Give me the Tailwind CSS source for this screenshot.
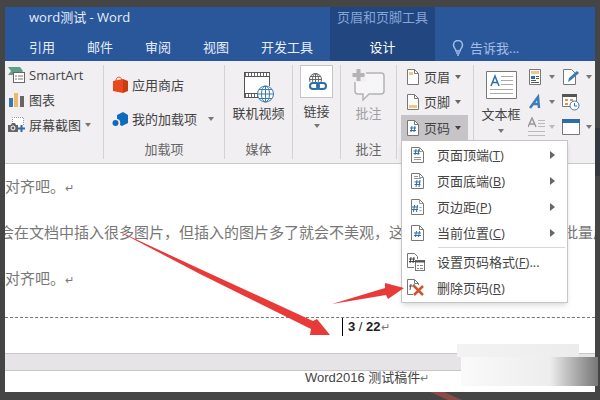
<!DOCTYPE html>
<html lang="zh-CN">
<head>
  <meta charset="UTF-8" />
  <meta name="viewport" content="width=device-width, initial-scale=1.0"/>
  <title>word测试 - Word</title>
  <script src="https://cdn.jsdelivr.net/npm/@tailwindcss/browser@4"></script>
</head>
<body class="relative min-h-screen bg-[#454545] px-[5px] pt-[7px] pb-2 overflow-hidden font-['Open_Sans','Noto_Sans_CJK_SC',sans-serif] text-[13px] leading-5 text-[#444]">

  <!-- window behind the dark backdrop, right edge -->
  <div class="absolute right-0 top-32 h-12 w-[5px] bg-[#34383f]"></div>

  <div class="relative flex flex-col min-h-[385px] bg-white overflow-hidden whitespace-nowrap">

    <!-- title bar + tabs -->
    <header class="flex h-[54px] bg-[#2a579a] text-[#e6eefa]">
      <div class="w-[325px] pl-6">
        <h1 class="h-[30px]">word测试 - Word</h1>
        <nav class="flex gap-8">
          <a href="#">引用</a>
          <a href="#">邮件</a>
          <a href="#">审阅</a>
          <a href="#">视图</a>
          <a href="#">开发工具</a>
        </nav>
      </div>
      <div class="w-[105px] bg-[#224680] text-center">
        <div class="h-[30px] text-[#86a5d8]">页眉和页脚工具</div>
        <a href="#" class="text-white">设计</a>
      </div>
      <label class="flex flex-1 items-center gap-[5px] pl-4 pt-[27px] text-[#a3bde6]">
        <svg class="w-[14px] h-4 shrink-0" viewBox="0 0 14 16" fill="none" stroke="#a3bde6" stroke-width="1.5">
          <path d="M5 11C5 9 2.500 8 2.500 5a4.500 4.500 0 0 1 9 0C11.500 8 9 9 9 11zM5 13h4M6 15h2"/>
        </svg>
        <input type="text" placeholder="告诉我..." class="w-24 outline-none placeholder:text-[#a3bde6]" />
      </label>
    </header>

    <!-- ribbon -->
    <section class="relative z-10 flex h-[103px] bg-[#f1eff2] border-b border-[#c9c7ca] py-1">
      <div class="flex flex-col gap-[5px] w-[99px] border-r border-[#d3d1d4] pl-[3px]">
        <button class="flex items-center gap-1">
          <svg class="w-[17px] h-[18px]" viewBox="0 0 17 18">
            <path d="M0 1h12l3 4-3 4H0l3-4z" fill="#5f9f87"/>
            <rect x="5.500" y="6.500" width="11" height="10" fill="#fff" stroke="#666"/>
            <path d="M7 10h2M7 13h2M10 10h5M10 13h5" stroke="#777"/>
          </svg>SmartArt
        </button>
        <button class="flex items-center gap-1">
          <svg class="w-[17px] h-4" viewBox="0 0 17 16">
            <path d="M1 6h4v9H1z" fill="#3b76ad"/><path d="M6 1h4v14H6z" fill="#e8b970"/><path d="M12 4h4v11h-4z" fill="#666"/>
          </svg>图表
        </button>
        <button class="flex items-center gap-1">
          <svg class="w-[17px] h-4" viewBox="0 0 17 16">
            <path d="M4.500 9V.5h11V9" fill="#fff" stroke="#999" stroke-dasharray="1 1"/>
            <path d="M0 8h3l1-2h3l1 2h2v7H0z" fill="#666"/><circle cx="5" cy="11" r="2" fill="#666" stroke="#fff"/>
            <path d="M13.500 8v7M10 11.500h7" stroke="#3268a8" stroke-width="2"/>
          </svg>屏幕截图
          <svg class="w-[6px] h-1" viewBox="0 0 6 4"><path d="M0 0h6L3 4z" fill="#777"/></svg>
        </button>
      </div>

      <div class="flex flex-col justify-between w-[121px] border-r border-[#d3d1d4] pl-2 pt-[10px]">
        <div class="flex flex-col gap-[14px]">
          <button class="flex items-center gap-1">
            <svg class="w-4 h-[18px]" viewBox="0 0 16 18">
              <path d="M1 5l10-2v14l-10-2z" fill="#e8481c"/><path d="M11 3l5 2v10l-5 2z" fill="#c93c14"/>
              <path d="M4 5c0-5 5-5 6-1" fill="none" stroke="#e8481c"/>
            </svg>应用商店
          </button>
          <button class="flex items-center gap-1">
            <svg class="w-4 h-4" viewBox="0 0 16 16">
              <path d="M5 4l6-3 5 3v8l-6 3-2-1c1-4-1-6-3-6z" fill="#0f6cbd"/><circle cx="3.500" cy="12" r="3" fill="#0f6cbd"/>
            </svg>我的加载项
            <svg class="ml-[7px] w-[6px] h-1" viewBox="0 0 6 4"><path d="M0 0h6L3 4z" fill="#777"/></svg>
          </button>
        </div>
        <div class="pr-2 text-center text-[#666]">加载项</div>
      </div>

      <div class="flex flex-col items-center w-[68px] border-r border-[#d3d1d4]">
        <button class="flex flex-col items-center pt-[6px]">
          <svg class="w-8 h-8" viewBox="0 0 32 32" fill="none">
            <path d="M2 1h26v25H2z" fill="#fff"/>
            <path d="M2.500 1v25M27.500 1v14M2 1.500h26M2 5.500h26M2 22.500h14M2 26.500h14" stroke="#555"/>
            <path d="M3 3.500h25M3 24.500h13" stroke="#666" stroke-width="3" stroke-dasharray="1 2"/>
            <circle cx="23.500" cy="23" r="8" fill="#fff" stroke="#3c7aa8"/>
            <path d="M15.500 23h16M23.500 15v16M17 18.500h13M17 27.500h13" stroke="#3c7aa8"/><ellipse cx="23.500" cy="23" rx="4" ry="8" stroke="#3c7aa8"/>
          </svg>
          联机视频
        </button>
        <div class="mt-auto text-[#666]">媒体</div>
      </div>

      <div class="flex flex-col items-center w-12 border-r border-[#d3d1d4]">
        <button class="flex flex-col items-center gap-[3px]">
          <svg class="w-[33px] h-[33px] bg-white border border-[#c6c4c7]" viewBox="0 0 31 31" fill="none">
            <circle cx="14.500" cy="13.500" r="6" stroke="#666"/><ellipse cx="14.500" cy="13.500" rx="3" ry="6" stroke="#666"/><path d="M8 13.500h13M9 10.500h11M14.500 7v9" stroke="#666"/>
            <rect x="8" y="16" width="18" height="8" fill="#fff"/>
            <rect x="9" y="17" width="9" height="6" rx="3" stroke="#2d6ea8" stroke-width="2"/>
            <rect x="16" y="17" width="9" height="6" rx="3" stroke="#2d6ea8" stroke-width="2"/>
          </svg>
          链接
          <svg class="w-[6px] h-1" viewBox="0 0 6 4"><path d="M0 0h6L3 4z" fill="#777"/></svg>
        </button>
      </div>

      <div class="flex flex-col items-center w-14 border-r border-[#d3d1d4] text-[#666]">
        <button disabled class="flex flex-col items-center gap-px pt-[3px] text-[#a09ea2]">
          <svg class="w-[34px] h-[34px]" viewBox="0 0 34 34">
            <path d="M3 8q0-3 3-3h23q3 0 3 3v15q0 3-3 3H17l-6 6v-6H6q-3 0-3-3z" fill="#f6f5f7" stroke="#b5b3b6" stroke-width="1.500"/>
            <path d="M0 0h14v14H0z" fill="#f1eff2"/><path d="M6.500 1v12M.5 7h12" stroke="#b5b3b6" stroke-width="4"/>
          </svg>
          批注
        </button>
        <div class="mt-auto">批注</div>
      </div>

      <div class="flex flex-col gap-px w-[77px] border-r border-[#d3d1d4] pl-1">
        <button class="flex items-center w-[67px] h-6 gap-[5px] pl-[6px]">
          <svg class="w-3 h-4" viewBox="0 0 12 16"><path d="M.5.500h7l4 4v11H.5z" fill="#fff" stroke="#777"/><path d="M7.500.500v4h4" fill="none" stroke="#777"/><path d="M2 3h4v3H2z" fill="#ecc987"/></svg>
          页眉
          <svg class="w-[6px] h-1" viewBox="0 0 6 4"><path d="M0 0h6L3 4z" fill="#666"/></svg>
        </button>
        <button class="flex items-center w-[67px] h-6 gap-[5px] pl-[6px]">
          <svg class="w-3 h-4" viewBox="0 0 12 16"><path d="M.5.500h7l4 4v11H.5z" fill="#fff" stroke="#777"/><path d="M7.500.500v4h4" fill="none" stroke="#777"/><path d="M2 11h8v3H2z" fill="#ecc987"/></svg>
          页脚
          <svg class="w-[6px] h-1" viewBox="0 0 6 4"><path d="M0 0h6L3 4z" fill="#666"/></svg>
        </button>
        <div class="relative">
          <button class="flex items-center w-[67px] h-[25px] gap-[5px] pl-[6px] bg-[#c6c4c6]">
            <svg class="w-3 h-4" viewBox="0 0 12 16"><path d="M.5.500h7l4 4v11H.5z" fill="#fff" stroke="#777"/><path d="M7.500.500v4h4" fill="none" stroke="#777"/><path d="M5 6l-1 6M8 6l-1 6M3 8h6M3 10.500h6" stroke="#2d6ea8"/></svg>
            页码
            <svg class="w-[6px] h-1" viewBox="0 0 6 4"><path d="M0 0h6L3 4z" fill="#444"/></svg>
          </button>

          <!-- page number menu -->
          <div class="absolute left-0 top-full w-[167px] bg-white border border-[#c6c4c7] py-px shadow-md">
            <button class="flex items-center w-full h-[26px] pl-[9px] pr-3">
              <svg class="mr-[13px] w-[13px] h-4" viewBox="0 0 13 16"><path d="M.5.500h8l4 4v11H.5z" fill="#fff" stroke="#777"/><path d="M8.500.500v4h4M3 10.500h7M3 12.500h7" fill="none" stroke="#999"/><path d="M5 2l-1 6M8 2l-1 6M2.500 4h6M2.500 6.500h6" stroke="#2d6ea8"/></svg>
              <span>页面顶端(<u>T</u>)</span>
              <svg class="ml-auto w-[5px] h-2" viewBox="0 0 5 8"><path d="M0 0l5 4-5 4z" fill="#666"/></svg>
            </button>
            <button class="flex items-center w-full h-[26px] pl-[9px] pr-3">
              <svg class="mr-[13px] w-[13px] h-4" viewBox="0 0 13 16"><path d="M.5.500h8l4 4v11H.5z" fill="#fff" stroke="#777"/><path d="M8.500.500v4h4M3 3.500h4M3 5.500h7" fill="none" stroke="#999"/><path d="M6 7l-1 7M9 7l-1 7M3.500 9h6M3.500 11.500h6" stroke="#2d6ea8"/></svg>
              <span>页面底端(<u>B</u>)</span>
              <svg class="ml-auto w-[5px] h-2" viewBox="0 0 5 8"><path d="M0 0l5 4-5 4z" fill="#666"/></svg>
            </button>
            <button class="flex items-center w-full h-[26px] pl-[9px] pr-3">
              <svg class="mr-[13px] w-[13px] h-4" viewBox="0 0 13 16"><path d="M.5.500h8l4 4v11H.5z" fill="#fff" stroke="#777"/><path d="M8.500.500v4h4M8.500 8.500h2M8.500 11.500h2" fill="none" stroke="#999"/><path d="M3.500 6l-1 7M6.500 6l-1 7M1 8h6M1 10.500h6" stroke="#2d6ea8"/></svg>
              <span>页边距(<u>P</u>)</span>
              <svg class="ml-auto w-[5px] h-2" viewBox="0 0 5 8"><path d="M0 0l5 4-5 4z" fill="#666"/></svg>
            </button>
            <button class="flex items-center w-full h-[26px] pl-[9px] pr-3">
              <svg class="mr-[13px] w-[13px] h-4" viewBox="0 0 13 16"><path d="M.5.500h8l4 4v11H.5z" fill="#fff" stroke="#777"/><path d="M8.500.500v4h4" fill="none" stroke="#777"/><path d="M5.500 6l-1 6M8.500 6l-1 6M3 8h7M3 10.500h7" stroke="#2d6ea8"/></svg>
              <span>当前位置(<u>C</u>)</span>
              <svg class="ml-auto w-[5px] h-2" viewBox="0 0 5 8"><path d="M0 0l5 4-5 4z" fill="#666"/></svg>
            </button>
            <hr class="my-px ml-9 mr-[2px] border-[#d8d6d9]" />
            <button class="flex items-center w-full h-[26px] pl-[5px]">
              <svg class="mr-3 w-[18px] h-[18px]" viewBox="0 0 18 18"><path d="M7 14.500H.5V.500h7l3 3V6" fill="#fff" stroke="#777"/><path d="M4 4l-1 6M7 4l-1 6M2 6h6M2 8.500h6" stroke="#444"/><rect x="8.500" y="7.500" width="9" height="10" fill="#fff" stroke="#777"/><path d="M8 8.500h10" stroke="#555" stroke-width="2"/><path d="M10 12.500h2M10 15.500h2M13 12.500h3M13 15.500h3" stroke="#888"/></svg>
              <span>设置页码格式(<u>F</u>)...</span>
            </button>
            <button class="flex items-center w-full h-[26px] pl-[5px]">
              <svg class="mr-3 w-[18px] h-[18px]" viewBox="0 0 18 18"><path d="M6 15.500H.5V.500h7l4 4V6M7.500.500v4h4" fill="none" stroke="#777"/><path d="M4 5l-1 6M2 7h6M7 5v3" stroke="#555"/><path d="M7 7l9 9M16 7l-9 9" stroke="#d4502e" stroke-width="2.500"/></svg>
              <span>删除页码(<u>R</u>)</span>
            </button>
          </div>
        </div>
      </div>

      <div class="flex flex-1 pl-[7px]">
        <button class="flex flex-col items-center w-10 h-[68px] pt-[6px] gap-[5px]">
          <svg class="w-[31px] h-7 shrink-0" viewBox="0 0 31 28" fill="none">
            <path d="M.5.500h30v27H.5z" fill="#fff" stroke="#777"/>
            <path d="M5 15l4-10 4 10M6.500 11.500h5" stroke="#2d6ea8" stroke-width="1.500"/>
            <path d="M15 5.500h12M15 9.500h12M15 13.500h12M4 18.500h23M4 22.500h23" stroke="#aaa"/>
          </svg>
          文本框
          <svg class="w-[6px] h-1 shrink-0" viewBox="0 0 6 4"><path d="M0 0h6L3 4z" fill="#777"/></svg>
        </button>
        <div class="flex flex-col gap-px ml-[7px] w-[34px]">
          <button aria-label="文档部件" class="flex items-center h-6 gap-[7px]">
            <svg class="w-[14px] h-4" viewBox="0 0 14 16"><path d="M1.500.500h11v15h-11z" fill="#fff" stroke="#777"/><path d="M3 2h8v3H3z" fill="#ecc987"/><path d="M3 7h4v3H3z" fill="#2d6ea8"/><path d="M8 7.500h3M8 9.500h3M3 11.500h5M3 13.500h8" stroke="#555"/></svg>
            <svg class="w-[6px] h-1" viewBox="0 0 6 4"><path d="M0 0h6L3 4z" fill="#777"/></svg>
          </button>
          <button aria-label="艺术字" class="flex items-center h-6 gap-[7px]">
            <svg class="w-[14px] h-4" viewBox="0 0 14 16"><path d="M2 14l8-11 1 11M5 10h6" fill="none" stroke="#3b7db8" stroke-width="2.500"/></svg>
            <svg class="w-[6px] h-1" viewBox="0 0 6 4"><path d="M0 0h6L3 4z" fill="#777"/></svg>
          </button>
          <button disabled aria-label="首字下沉" class="flex items-center h-6 gap-1">
            <svg class="w-[17px] h-5" viewBox="0 0 17 20" fill="none"><path d="M0 10l4-9 4 9M1.500 7h5" stroke="#999" stroke-width="1.500"/><path d="M10 3.500h7M10 6.500h7M10 9.500h7M0 14.500h17M0 18.500h17" stroke="#bbb"/></svg>
            <svg class="w-[6px] h-1" viewBox="0 0 6 4"><path d="M0 0h6L3 4z" fill="#bbb"/></svg>
          </button>
        </div>
        <div class="flex flex-col gap-px">
          <button aria-label="签名行" class="flex items-center h-6 gap-[6px]">
            <svg class="w-[18px] h-4" viewBox="0 0 18 16"><path d="M1.500.500h8l4 4v11h-12z" fill="#fff" stroke="#777"/><path d="M6 13l1-4 8-7 2 2-8 7z" fill="#3b76ad"/></svg>
            <svg class="w-[6px] h-1" viewBox="0 0 6 4"><path d="M0 0h6L3 4z" fill="#777"/></svg>
          </button>
          <button aria-label="日期和时间" class="flex items-center h-6">
            <svg class="w-[18px] h-[18px]" viewBox="0 0 18 18" fill="none"><path d="M.5 1.500h14v12H.5z" fill="#fff" stroke="#777"/><path d="M0 2.500h15" stroke="#555" stroke-width="3"/><path d="M3 6h3v2H3zM8 6h3v2H8zM3 10h3v2H3z" fill="#e0964a"/><circle cx="12.500" cy="12.500" r="4.500" fill="#fff" stroke="#3c7aa8"/><path d="M12.500 10v3H15" stroke="#3c7aa8"/></svg>
          </button>
          <button aria-label="对象" class="flex items-center h-6 gap-[6px]">
            <svg class="w-[18px] h-4" viewBox="0 0 18 16"><path d="M.5.500h17v15H.5z" fill="#fff" stroke="#777"/><path d="M0 0h18v4H0z" fill="#2d6ea8"/></svg>
            <svg class="w-[6px] h-1" viewBox="0 0 6 4"><path d="M0 0h6L3 4z" fill="#777"/></svg>
          </button>
        </div>
      </div>
    </section>

    <!-- document -->
    <main class="flex flex-1 flex-col">
      <div class="flex flex-col gap-[26px] pt-3 h-[154px] text-[15px] text-[#777] border-b border-dashed border-[#777]">
        <p class="h-5">对齐吧。<span class="text-[11px] leading-none">↵</span></p>
        <p class="flex justify-between h-5 -ml-[6px] -mr-[13px]"><span>会在文档中插入很多图片，但插入的图片多了就会不美观，这</span><span>批量居</span></p>
        <p class="h-5">对齐吧。<span class="text-[11px] leading-none">↵</span></p>
      </div>
      <div class="flex h-[35px] pl-[337px]">
        <div class="h-[18px] border-l border-black pl-[5px] text-[13px] leading-[18px] text-[#222] font-['Liberation_Sans','Noto_Sans_CJK_SC',sans-serif]"><b>3</b> / <b>22</b><span class="text-[11px] text-[#777]">↵</span></div>
      </div>
      <div class="h-[18px] bg-[#e6e4e7] border-y border-[#c9c7ca]"></div>
      <p class="h-4 pl-[300px] leading-[14px] font-['Liberation_Sans','Noto_Sans_CJK_SC',sans-serif]">Word2016 测试稿件<span class="text-[11px] leading-none text-[#777]">↵</span></p>
    </main>
  </div>

  <!-- smudged patches, bottom right -->
  <div class="absolute left-[457px] top-[344px] w-[122px] h-[13px] bg-linear-to-r from-[#f3f3f3] to-[#ececec]"></div>
  <div class="absolute left-[461px] top-[357px] w-[137px] h-[29px] bg-linear-to-r from-[#fafafa] via-[#ededed] via-65% to-[#777]"></div>

  <!-- red pointers -->
  <svg class="absolute left-0 top-0 z-20 w-[600px] h-[400px] pointer-events-none" viewBox="0 0 600 400">
    <path d="M116 230L200 269 313 321 317 319 330 335H310L311 329 200 274z" fill="#e93a3a"/>
    <path d="M332 304L385 288V283L404 288 388 299 386 295z" fill="#e93a3a"/>
    <path d="M430 392h14l18 8h-14z" fill="#8a4a48"/>
  </svg>
</body>
</html>
